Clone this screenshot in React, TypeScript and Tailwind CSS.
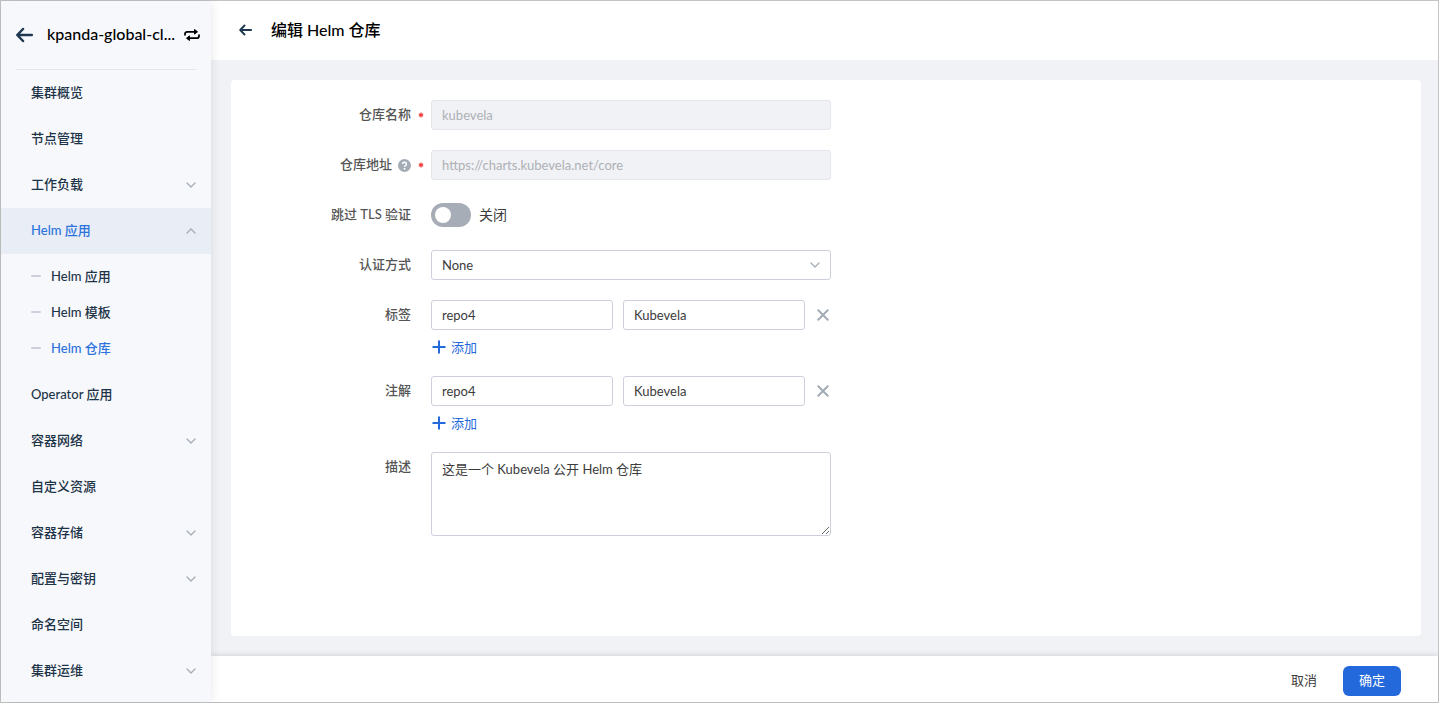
import { useState } from "react";

interface NavItem {
  label: string;
  expandable?: boolean;
  children?: string[];
}

interface Pair {
  id: number;
  key: string;
  value: string;
}

const navItems: NavItem[] = [
  { label: "集群概览" },
  { label: "节点管理" },
  { label: "工作负载", expandable: true },
  {
    label: "Helm 应用",
    expandable: true,
    children: ["Helm 应用", "Helm 模板", "Helm 仓库"],
  },
  { label: "Operator 应用" },
  { label: "容器网络", expandable: true },
  { label: "自定义资源" },
  { label: "容器存储", expandable: true },
  { label: "配置与密钥", expandable: true },
  { label: "命名空间" },
  { label: "集群运维", expandable: true },
];

const inputClass =
  "h-[30px] min-w-0 rounded-[3px] border border-[#cdd1dd] bg-white px-2.5 text-[13px] text-[#3c3c3c] outline-none focus:border-[#2469db] disabled:border-[#e3e5ea] disabled:bg-[#f1f2f6] disabled:text-[#adb0b5]";

function ArrowLeft({ className }: { className?: string }) {
  return (
    <svg
      viewBox="0 0 18 16"
      className={className}
      fill="none"
      stroke="currentColor"
      strokeWidth="2.5"
      strokeLinecap="round"
      strokeLinejoin="round"
    >
      <path d="M7 2 1.300 8 7 14M1.600 8h14.200" />
    </svg>
  );
}

function SwitchIcon() {
  return (
    <svg viewBox="0 0 16 14" className="h-3.5 w-4" fill="none">
      <path
        d="M1 6.800V6a2.200 2.200 0 0 1 2.200-2.200H11M15 7.200V8a2.200 2.200 0 0 1-2.200 2.200H5"
        stroke="currentColor"
        strokeWidth="1.8"
        strokeLinecap="round"
      />
      <path
        d="M10.500 1.500v4.600l3-2.300zM5.500 7.900v4.600l-3-2.300z"
        fill="currentColor"
        stroke="currentColor"
        strokeLinejoin="round"
      />
    </svg>
  );
}

function Chevron({ up = false }: { up?: boolean }) {
  return (
    <svg
      viewBox="0 0 10 6"
      className="h-1.5 w-2.5 shrink-0 text-[#a5adb8]"
      fill="none"
      stroke="currentColor"
      strokeWidth="1.3"
      strokeLinecap="round"
      strokeLinejoin="round"
    >
      <path d={up ? "M1 5l4-4 4 4" : "M1 1l4 4 4-4"} />
    </svg>
  );
}

function Sidebar() {
  const [current, setCurrent] = useState("Helm 仓库");

  return (
    <aside className="relative z-10 flex w-[210px] shrink-0 flex-col bg-[#f7f8fc] shadow-[0_0_10px_rgba(0,0,0,0.1)]">
      <div className="mx-[15px] flex h-[69px] items-center border-b border-[#e3e5ea] text-black">
        <button aria-label="返回集群列表" className="text-[#1d3850]">
          <ArrowLeft className="h-4 w-[18px]" />
        </button>
        <span className="ml-[13px] pb-0.5 text-base font-medium whitespace-nowrap">
          kpanda-global-cl...
        </span>
        <button aria-label="切换集群" className="-mr-1 ml-auto">
          <SwitchIcon />
        </button>
      </div>
      <nav className="text-[13px] font-medium text-[#1d3448]">
        {navItems.map((item) => (
          <div key={item.label}>
            <button
              aria-expanded={item.expandable ? !!item.children : undefined}
              className={`flex h-[46px] w-full items-center justify-between pr-[15px] pl-[30px] ${
                item.children ? "bg-[#e8edf6] text-[#2c73dd]" : ""
              }`}
            >
              <span className="pb-0.5">{item.label}</span>
              {item.expandable && <Chevron up={!!item.children} />}
            </button>
            {item.children && (
              <div className="pt-1 pb-1.5">
                {item.children.map((child) => (
                  <a
                    key={child}
                    href="#"
                    onClick={() => setCurrent(child)}
                    className={`flex h-9 items-center gap-2.5 pl-[30px] ${
                      child === current ? "text-[#2c73dd]" : ""
                    }`}
                  >
                    <span className="h-0.5 w-2.5 rounded-full bg-[#cdd0da]" />
                    {child}
                  </a>
                ))}
              </div>
            )}
          </div>
        ))}
      </nav>
    </aside>
  );
}

function Row({
  label,
  htmlFor,
  required,
  help,
  children,
}: {
  label: string;
  htmlFor: string;
  required?: boolean;
  help?: boolean;
  children: React.ReactNode;
}) {
  return (
    <div className="flex">
      <div className="flex h-[30px] w-[180px] shrink-0 items-center justify-end text-[#555]">
        <label htmlFor={htmlFor} className="pb-0.5 font-medium">
          {label}
        </label>
        {help && (
          <svg viewBox="0 0 12 12" className="ml-1.5 size-[13px]" fill="none">
            <circle cx="6" cy="6" r="6" fill="#a3abb5" />
            <path
              d="M4.200 4.600a1.800 1.600 0 1 1 2.800 1.400c-.6.4-1 .6-1 1.200"
              stroke="#fff"
              strokeWidth="1.4"
            />
            <circle cx="6" cy="9" r=".9" fill="#fff" />
          </svg>
        )}
      </div>
      <div className="flex h-[30px] w-5 shrink-0 items-center justify-center">
        {required && (
          <svg viewBox="0 0 6 6" className="size-1.5" stroke="#ee3b3b" strokeWidth="1.2">
            <path d="M3 .5v5M.8 1.800l4.400 2.400M5.200 1.800.8 4.200" />
          </svg>
        )}
      </div>
      <div className="w-[400px]">{children}</div>
    </div>
  );
}

function PairEditor({ name, id }: { name: string; id: string }) {
  const [pairs, setPairs] = useState<Pair[]>([
    { id: 1, key: "repo4", value: "Kubevela" },
  ]);

  const update = (pairId: number, patch: Partial<Pair>) =>
    setPairs(pairs.map((p) => (p.id === pairId ? { ...p, ...patch } : p)));

  return (
    <div className="flex flex-col gap-2">
      {pairs.map((pair, i) => (
        <div key={pair.id} className="flex items-center gap-2.5">
          <input
            id={i === 0 ? id : undefined}
            aria-label={`${name}键`}
            className={`flex-1 ${inputClass}`}
            value={pair.key}
            onChange={(e) => update(pair.id, { key: e.target.value })}
          />
          <input
            aria-label={`${name}值`}
            className={`flex-1 ${inputClass}`}
            value={pair.value}
            onChange={(e) => update(pair.id, { value: e.target.value })}
          />
          <button
            type="button"
            aria-label={`删除${name}`}
            className="flex w-4 justify-center text-[#a3abb5]"
            onClick={() => setPairs(pairs.filter((p) => p.id !== pair.id))}
          >
            <svg viewBox="0 0 12 12" className="size-3" stroke="currentColor" strokeWidth="2" strokeLinecap="round">
              <path d="M1.300 1.300l9.400 9.400M10.700 1.300l-9.400 9.400" />
            </svg>
          </button>
        </div>
      ))}
      <button
        type="button"
        className="flex h-[18px] items-center gap-1 self-start text-[#2469db]"
        onClick={() =>
          setPairs([...pairs, { id: Date.now(), key: "", value: "" }])
        }
      >
        <svg viewBox="0 0 16 16" className="size-4" stroke="currentColor" strokeWidth="2">
          <path d="M8 1.500v13M1.500 8h13" />
        </svg>
        添加
      </button>
    </div>
  );
}

export default function App() {
  const [skipTls, setSkipTls] = useState(false);

  return (
    <div className="flex min-h-screen border border-[#c4c4c4] bg-[#f1f2f6] font-[Lato,'Noto_Sans_CJK_SC',sans-serif] text-[13px] leading-5">
      <Sidebar />
      <main className="flex min-w-0 flex-1 flex-col">
        <header className="flex h-[59px] items-center bg-white pb-0.5 pl-7">
          <button aria-label="返回" className="text-[#1d3850]">
            <ArrowLeft className="h-3 w-3.5" />
          </button>
          <h1 className="ml-[18px] text-base font-medium text-black">
            编辑 Helm 仓库
          </h1>
        </header>

        <form
          id="repo-form"
          className="my-5 mr-[17px] ml-5 flex flex-1 flex-col gap-5 rounded-[4px] bg-white py-5"
          onSubmit={(e) => e.preventDefault()}
        >
          <Row label="仓库名称" htmlFor="name" required>
            <input id="name" disabled className={`w-full ${inputClass}`} defaultValue="kubevela" />
          </Row>
          <Row label="仓库地址" htmlFor="url" required help>
            <input
              id="url"
              disabled
              className={`w-full ${inputClass}`}
              defaultValue="https://charts.kubevela.net/core"
            />
          </Row>
          <Row label="跳过 TLS 验证" htmlFor="tls">
            <div className="flex h-[30px] items-center gap-2 text-sm text-[#3c3c3c]">
              <input
                id="tls"
                type="checkbox"
                role="switch"
                checked={skipTls}
                onChange={(e) => setSkipTls(e.target.checked)}
                className="h-6 w-10 appearance-none rounded-full bg-[#a6adb6] p-1 before:block before:size-4 before:rounded-full before:bg-white checked:bg-[#2469db] checked:before:ml-4"
              />
              <span>{skipTls ? "开启" : "关闭"}</span>
            </div>
          </Row>
          <Row label="认证方式" htmlFor="auth">
            <div className="relative">
              <select id="auth" className={`w-full appearance-none ${inputClass}`}>
                <option>None</option>
                <option>Basic</option>
              </select>
              <div className="pointer-events-none absolute inset-y-0 right-[11px] flex items-center">
                <Chevron />
              </div>
            </div>
          </Row>
          <Row label="标签" htmlFor="labels">
            <PairEditor name="标签" id="labels" />
          </Row>
          <Row label="注解" htmlFor="annotations">
            <PairEditor name="注解" id="annotations" />
          </Row>
          <Row label="描述" htmlFor="description">
            <textarea
              id="description"
              className="block h-[84px] w-full rounded-[3px] border border-[#cdd1dd] px-2.5 py-1.5 text-[#3c3c3c] outline-none focus:border-[#2469db]"
              defaultValue="这是一个 Kubevela 公开 Helm 仓库"
            />
          </Row>
        </form>

        <footer className="flex h-[46px] items-center justify-end gap-2.5 bg-white pt-1 pr-[37px] shadow-[0_-1px_5px_rgba(0,0,0,0.12)]">
          <button type="button" className="h-[30px] px-4 pb-0.5 text-[#3c3c3c]">
            取消
          </button>
          <button
            type="submit"
            form="repo-form"
            className="h-[30px] rounded-md bg-[#2469db] px-4 pb-0.5 text-white"
          >
            确定
          </button>
        </footer>
      </main>
    </div>
  );
}
